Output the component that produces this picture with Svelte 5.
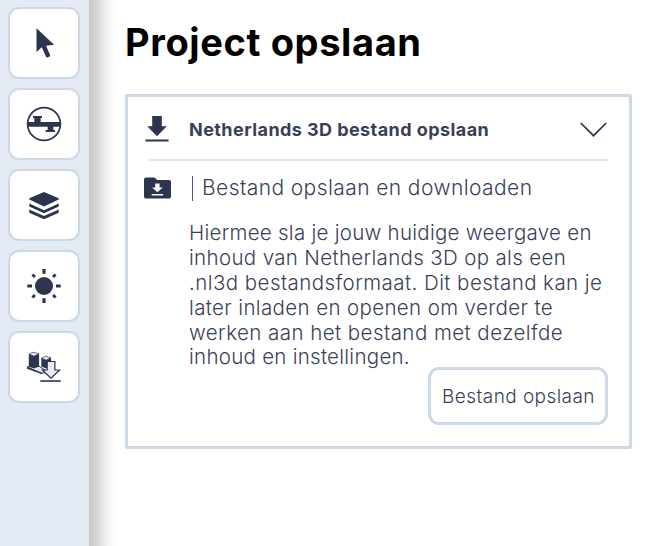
<script>
  const tools = ['select', 'section', 'layers', 'sun', 'download'];
  const lines = [
    { text: 'Hiermee sla je jouw huidige weergave en', tracking: 0.27 },
    { text: 'inhoud van Netherlands 3D op als een', tracking: 0.34 },
    { text: '.nl3d bestandsformaat. Dit bestand kan je', tracking: 0.44 },
    { text: 'later inladen en openen om verder te', tracking: 0.37 },
    { text: 'werken aan het bestand met dezelfde', tracking: 0.45 },
    { text: 'inhoud en instellingen.', tracking: 0.27 }
  ];
</script>

<div class="app">
  <nav>
    {#each tools as tool}
      <button class="tool" aria-label={tool}>
        <svg width="40" height="40" viewBox="0 0 40 40">
          {#if tool === 'select'}
            <path d="M12.5 5.3V29l5.3-4.8 4.2 9.6q.5 1 1.5.6l2-.8q1-.5.6-1.5l-4-9.3 8-1.1z" />
          {:else if tool === 'section'}
            <circle cx="20" cy="20" r="16.4" fill="none" stroke="#2c344f" stroke-width="1.7" />
            <path d="M3.5 18h6.8v-4H9v-2h9v2h-1.4v4h19.9v4.8h-7.2v3.3H31V28h-9.3v-1.9h2v-3.3H3.5z" />
          {:else if tool === 'layers'}
            <path d="M20 7l14.7 6.3v1.2L20 21.4 5.3 14.5v-1.2z" />
            <path d="M5.3 18.5L20 25.3l14.7-6.8v3.1L20 28.3 5.3 21.6zM5.3 24.6L20 31l14.7-6.4v3.1L20 34.2 5.3 27.7z" />
          {:else if tool === 'sun'}
            <circle cx="20" cy="20" r="9" />
            <g fill="none" stroke="#2c344f" stroke-width="3.2">
              <path d="M20 3v4.8M20 32.2V37M3.3 20H8M32 20h4.7" />
              <path d="M8.4 8.4l2.6 2.6M31.6 8.4L29 11M8.4 31.6L11 29M31.6 31.6L29 29" stroke-width="2.8" />
            </g>
          {:else}
            <path d="M3 20l15 6.5 5-2.3-8-5z" fill="#e7ecf5" stroke="#2c344f" />
            <path d="M3 20v1.7L17.5 27v-1.4z" />
            <path d="M4.8 7v12.5l5.2 2 5.1-2V7zM17.3 11v8.5l5 2 4.8-2V11z" />
            <path d="M5 7.2l4-2 5.8 1.6L10 9.3zM17.6 11.2l4-2 5.3 1.7-4.8 2.3z" fill="#e7ecf5" stroke="#2c344f" stroke-width=".7" />
            <path d="M23.2 14.5h7.7V23h4.7L27 31.2 18.4 23h4.8z" fill="#e7ecf5" stroke="#2c344f" stroke-width="1.2" />
            <path d="M16.3 33.2h20.4v1.6H16.3z" />
          {/if}
        </svg>
      </button>
    {/each}
  </nav>

  <main>
    <h1>Project opslaan</h1>
    <section>
      <header>
        <svg width="24" height="27" viewBox="0 0 24 27">
          <path d="M7.2 0h9.6v10.3h4.9L12 20.3 2.3 10.3h4.9zM.4 23.6h23.2v1.8H.4z" />
        </svg>
        <h2>Netherlands 3D bestand opslaan</h2>
        <svg class="chevron" width="28" height="16" viewBox="0 0 28 16">
          <path d="M.8 1L13.5 13.7 26.2 1" fill="none" stroke="#2c344f" stroke-width="1.7" />
        </svg>
      </header>
      <div class="rule"></div>
      <div class="option">
        <svg width="28" height="22" viewBox="0 0 28 22">
          <path d="M2 .4h8.5l2.7 2.7H25q2 0 2 2v14.5q0 2-2 2H2q-2 0-2-2V2.4q0-2 2-2z" />
          <path d="M11.2 6.4h4.4v4.1h3.1l-5.3 4.7-5.3-4.7h3.1zM7.7 17h11.5v1.4H7.7z" fill="#fff" />
        </svg>
        <span class="bar"></span>
        <h3>Bestand opslaan en downloaden</h3>
      </div>
      <p>
        {#each lines as line}
          <span style="letter-spacing: {line.tracking}px">{line.text}</span>
        {/each}
      </p>
      <button class="save">Bestand opslaan</button>
    </section>
  </main>
</div>

<style>
  :global(body) { background: #fff; overflow: hidden; }
  .app {
    display: flex;
    width: 657px;
    height: 546px;
    font-family: Inter, sans-serif;
    color: #393f5a;
    background: #fff;
  }
  svg { display: block; fill: #2c344f; flex: none; }
  button { font: inherit; color: inherit; padding: 0; margin: 0; background: #fff; }
  nav {
    box-sizing: border-box;
    width: 89px;
    flex: none;
    padding: 7px 0 0 8px;
    display: flex;
    flex-direction: column;
    gap: 9px;
    background: #e3eaf3;
  }
  .tool {
    width: 72px;
    height: 72px;
    flex: none;
    display: flex;
    align-items: center;
    justify-content: center;
    border: 2px solid #cdd8e7;
    border-radius: 11px;
  }
  main {
    flex: 1;
    padding: 18px 25px 0 36px;
    background: linear-gradient(to right, #c8c8c8 0, #d6d6d6 8px, #f1f1f1 18px, #fff 28px);
  }
  h1 {
    margin: 0 0 28px;
    font-size: 38px;
    line-height: 48px;
    font-weight: 700;
    letter-spacing: .62px;
    color: #000;
    white-space: nowrap;
  }
  section {
    box-sizing: border-box;
    width: 507px;
    height: 355px;
    padding: 18px 21px 0 16px;
    border: 3px solid #cdd9e5;
    border-radius: 2px;
    background: #fff;
    display: flex;
    flex-direction: column;
  }
  header { display: flex; align-items: center; height: 29px; padding-left: 1px; }
  h2 { margin: 0 0 0 20px; font-size: 18px; line-height: 28px; font-weight: 650; letter-spacing: .43px; white-space: nowrap; }
  .chevron { margin-left: auto; }
  .rule { height: 2px; margin: 15px 0 0 5px; background: #dce5f0; flex: none; }
  .option { display: flex; align-items: center; height: 26px; margin-top: 14px; }
  .bar { width: 1px; height: 25px; margin: 0 9px 0 20px; background: #555b70; }
  h3 { margin: 0; font-size: 21px; line-height: 26px; font-weight: 300; letter-spacing: .41px; white-space: nowrap; }
  p { margin: 20.4px 0 0 45px; font-size: 20.5px; line-height: 24.8px; font-weight: 300; white-space: nowrap; }
  p span { display: block; }
  .save {
    align-self: flex-end;
    margin-top: -3.4px;
    width: 180px;
    height: 58px;
    flex: none;
    padding: 2px 0 0 1px;
    border: 3px solid #cdd9e5;
    border-radius: 11px;
    font-size: 19px;
    font-weight: 300;
    letter-spacing: .43px;
    white-space: nowrap;
  }
</style>
